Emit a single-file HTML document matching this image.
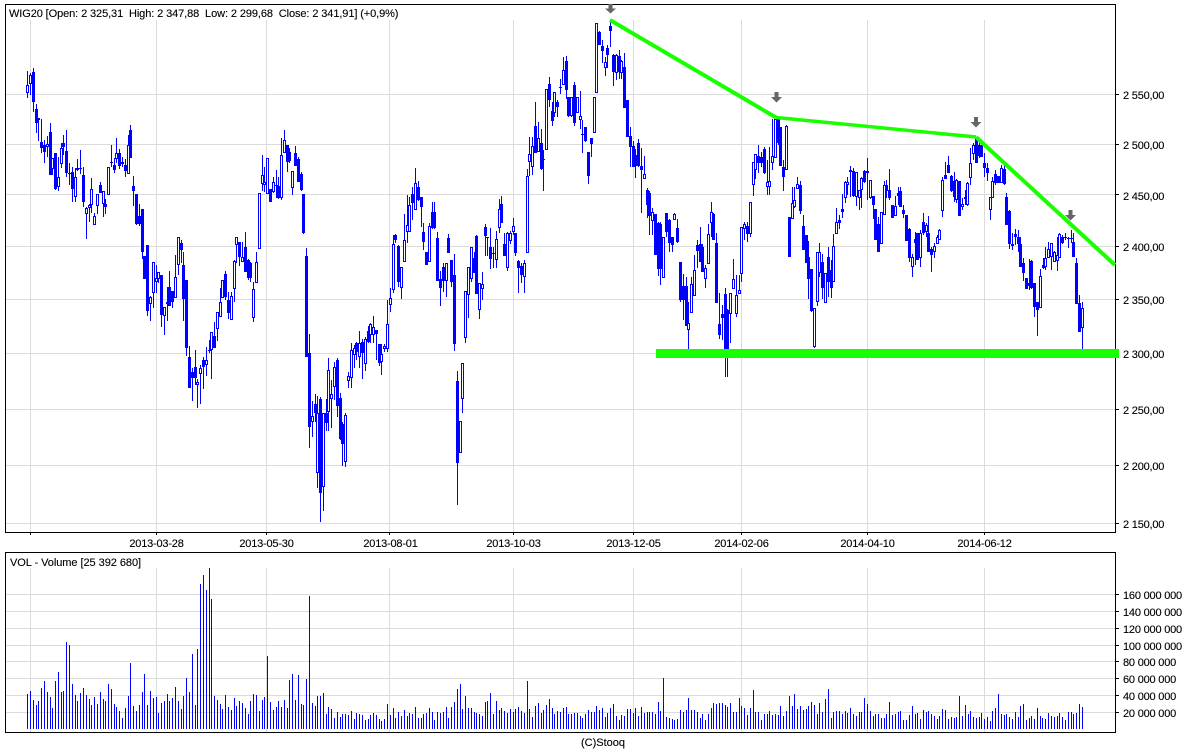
<!DOCTYPE html>
<html><head><meta charset="utf-8"><title>WIG20</title>
<style>
html,body{margin:0;padding:0;background:#fff;width:1200px;height:750px;overflow:hidden}
svg{display:block;position:absolute;left:0;top:0}
text{font-family:"Liberation Sans",Arial,sans-serif;font-size:11px;fill:#000;white-space:pre;letter-spacing:-.2px;stroke:#000;stroke-width:.12px}
text.t{letter-spacing:-.1px}
text.v{letter-spacing:-.05px}
text.c{letter-spacing:0}
</style></head><body>
<svg width="1200" height="750" viewBox="0 0 1200 750" xmlns="http://www.w3.org/2000/svg">
<rect width="1200" height="750" fill="#fff"/>
<g shape-rendering="crispEdges" fill="none">
<path stroke="#dbdbdb" d="M6 94.5H1115M6 144.5H1115M6 194.5H1115M6 246.5H1115M6 299.5H1115M6 353.5H1115M6 409.5H1115M6 465.5H1115M6 523.5H1115M30.5 20V532M156.5 20V532M266.5 20V532M389.5 20V532M513.5 20V532M633.5 20V532M741.5 20V532M867.5 20V532M984.5 20V532M6 594.5H1115M6 611.5H1115M6 628.5H1115M6 645.5H1115M6 661.5H1115M6 678.5H1115M6 695.5H1115M6 712.5H1115M30.5 568V732M156.5 568V732M266.5 568V732M389.5 568V732M513.5 568V732M633.5 568V732M741.5 568V732M867.5 568V732M984.5 568V732"/>
<path stroke="#000" d="M5.5 4.5H1115.5V532.5H5.5ZM5.5 552.5H1115.5V732.5H5.5ZM1115 94.5h4M1115 144.5h4M1115 194.5h4M1115 246.5h4M1115 299.5h4M1115 353.5h4M1115 409.5h4M1115 465.5h4M1115 523.5h4M1115 594.5h4M1115 611.5h4M1115 628.5h4M1115 645.5h4M1115 661.5h4M1115 678.5h4M1115 695.5h4M1115 712.5h4M30.5 532v3M156.5 532v3M266.5 532v3M389.5 532v3M513.5 532v3M633.5 532v3M741.5 532v3M867.5 532v3M984.5 532v3"/>
<!-- wicks -->
<path stroke="#00f" d="M27.5 71V98M30.5 73V95M33.5 68V112M36.5 104V133M38.5 118V141M41.5 119V153M44.5 140V163M47.5 136V157M50.5 123V175M52.5 158V175M55.5 153V190M58.5 157V191M61.5 143V168M63.5 135V155M66.5 130V177M69.5 163V185M72.5 167V202M75.5 168V202M77.5 159V171M80.5 150V174M83.5 167V207M86.5 207V239M89.5 204V222M91.5 178V213M94.5 213V225M97.5 194V214M100.5 182V193M103.5 191V217M105.5 199V214M108.5 167V194M111.5 145V167M114.5 158V173M116.5 138V163M119.5 149V169M122.5 157V167M125.5 159V177M128.5 135V173M130.5 125V158M133.5 176V206M136.5 194V225M139.5 204V226M142.5 209V259M144.5 256V279M147.5 245V316M150.5 296V321M153.5 262V308M156.5 265V293M158.5 273V283M161.5 275V327M164.5 307V335M167.5 287V321M169.5 271V306M172.5 291V308M175.5 255V297M178.5 237V275M181.5 240V263M183.5 252V321M186.5 280V356M189.5 346V388M192.5 368V401M195.5 350V385M197.5 379V408M200.5 365V404M203.5 357V389M206.5 347V376M209.5 340V353M211.5 332V379M214.5 322V348M217.5 312V341M220.5 288V317M222.5 280V297M225.5 271V300M228.5 292V319M231.5 292V320M234.5 260V302M236.5 237V263M239.5 242V266M242.5 242V262M245.5 232V272M248.5 259V280M250.5 262V282M253.5 282V322M256.5 252V283M259.5 193V248M262.5 155V191M264.5 167V192M267.5 158V193M270.5 189V202M273.5 177V193M276.5 170V198M278.5 177V199M281.5 138V200M284.5 130V152M287.5 145V172M289.5 148V163M292.5 171V195M295.5 146V166M298.5 157V182M301.5 172V191M303.5 194V234M306.5 248V357M309.5 334V448M312.5 401V437M315.5 394V422M317.5 396V488M320.5 397V522M323.5 413V511M326.5 399V431M328.5 358V431M331.5 380V428M334.5 362V400M337.5 358V417M340.5 393V440M342.5 422V466M345.5 413V467M348.5 372V388M351.5 343V388M354.5 345V368M356.5 342V360M359.5 331V368M362.5 339V379M365.5 337V371M368.5 326V343M370.5 323V343M373.5 316V343M376.5 330V360M379.5 344V366M381.5 344V375M384.5 344V352M387.5 300V352M390.5 288V312M393.5 235V293M395.5 234V243M398.5 245V287M401.5 267V299M404.5 214V262M407.5 195V243M409.5 197V231M412.5 187V220M415.5 168V210M418.5 181V201M421.5 197V227M423.5 223V250M426.5 252V265M429.5 223V262M432.5 202V229M434.5 202V229M437.5 232V281M440.5 271V306M443.5 263V292M446.5 263V297M448.5 234V253M451.5 260V287M454.5 254V351M457.5 371V505M460.5 421V453M462.5 363V413M465.5 291V343M468.5 267V318M471.5 247V282M474.5 252V273M476.5 235V294M479.5 283V319M482.5 272V300M485.5 224V256M487.5 237V256M490.5 228V269M493.5 247V268M496.5 231V268M499.5 199V233M501.5 196V223M504.5 233V256M507.5 232V271M510.5 231V244M513.5 218V235M515.5 233V256M518.5 260V293M521.5 263V283M524.5 260V293M527.5 169V252M529.5 137V176M532.5 137V175M535.5 102V153M538.5 122V152M541.5 129V170M543.5 150V191M546.5 89V150M549.5 77V107M552.5 102V126M554.5 92V117M557.5 100V117M560.5 79V94M563.5 57V85M566.5 56V99M568.5 97V117M571.5 97V117M574.5 82V126M577.5 97V113M580.5 91V129M582.5 120V153M585.5 127V142M588.5 152V184M591.5 138V157M594.5 97V132M596.5 23V92M599.5 31V45M602.5 40V63M605.5 57V76M607.5 45V68M610.5 22V47M613.5 54V86M616.5 54V80M619.5 50V79M621.5 60V79M624.5 53V108M627.5 100V137M630.5 127V167M633.5 141V167M635.5 149V178M638.5 139V167M641.5 148V213M644.5 156V179M647.5 188V218M649.5 191V235M652.5 208V235M655.5 214V255M658.5 222V276M660.5 222V285M663.5 237V277M666.5 213V237M669.5 219V252M672.5 237V252M674.5 213V220M677.5 219V243M680.5 262V302M683.5 274V320M686.5 277V326M688.5 302V350M691.5 277V313M694.5 255V295M697.5 240V268M700.5 227V262M702.5 244V272M705.5 265V288M708.5 224V263M711.5 202V237M713.5 213V240M716.5 233V303M719.5 293V339M722.5 305V340M725.5 288V377M727.5 309V377M730.5 293V343M733.5 259V288M736.5 275V317M739.5 275V293M741.5 227V282M744.5 222V240M747.5 222V242M750.5 202V237M753.5 162V196M755.5 154V179M758.5 145V173M761.5 152V167M764.5 147V174M767.5 160V195M769.5 147V195M772.5 119V170M775.5 119V157M778.5 118V145M780.5 127V166M783.5 160V191M786.5 125V170M789.5 217V257M792.5 187V219M794.5 187V208M797.5 177V188M800.5 181V214M803.5 215V250M806.5 235V263M808.5 241V299M811.5 269V312M814.5 308V348M817.5 252V306M819.5 243V277M822.5 254V299M825.5 273V302M828.5 247V297M831.5 260V298M833.5 234V281M836.5 208V233M839.5 215V229M842.5 194V218M845.5 181V203M847.5 177V195M850.5 166V197M853.5 168V197M856.5 172V206M859.5 190V210M861.5 177V208M864.5 170V183M867.5 158V200M870.5 180V199M873.5 196V219M875.5 209V240M878.5 217V252M881.5 212V243M884.5 181V215M886.5 180V198M889.5 169V200M892.5 205V218M895.5 196V215M898.5 187V205M900.5 187V207M903.5 205V218M906.5 215V241M909.5 228V262M912.5 254V277M915.5 232V265M917.5 233V260M920.5 230V267M923.5 213V235M926.5 223V237M928.5 216V252M931.5 247V272M934.5 243V258M937.5 235V244M939.5 229V239M942.5 177V217M945.5 162V179M948.5 156V173M951.5 175V192M954.5 172V202M956.5 179V203M959.5 181V216M962.5 198V210M965.5 190V205M967.5 182V206M970.5 148V185M973.5 143V160M976.5 138V163M979.5 140V158M981.5 145V157M984.5 153V177M987.5 163V181M990.5 197V220M992.5 177V197M995.5 170V185M998.5 176V183M1001.5 165V183M1004.5 165V185M1006.5 193V225M1009.5 210V249M1012.5 233V250M1015.5 229V245M1018.5 230V252M1020.5 237V267M1023.5 258V281M1026.5 278V289M1029.5 259V290M1031.5 260V289M1034.5 283V317M1037.5 302V336M1040.5 269V307M1043.5 258V269M1045.5 247V270M1048.5 242V257M1051.5 243V270M1054.5 251V261M1057.5 237V271M1059.5 233V258M1062.5 235V244M1065.5 233V240M1068.5 237V248M1071.5 230V243M1073.5 233V257M1076.5 258V304M1079.5 295V332M1082.5 302V350"/>
<!-- hollow bodies -->
<path stroke="#00f" fill="#fff" d="M26.5 85.5h2v7h-2zM29.5 75.5h2v8h-2zM46.5 144.5h2v2h-2zM51.5 158.5h2v10h-2zM57.5 177.5h2v9h-2zM60.5 148.5h2v15h-2zM74.5 177.5h2v19h-2zM85.5 208.5h2v5h-2zM88.5 205.5h2v2h-2zM90.5 189.5h2v15h-2zM93.5 216.5h2v8h-2zM96.5 194.5h2v11h-2zM102.5 191.5h2v12h-2zM107.5 167.5h2v27h-2zM115.5 153.5h2v5h-2zM127.5 145.5h2v28h-2zM149.5 297.5h2v6h-2zM152.5 262.5h2v30h-2zM155.5 278.5h2v3h-2zM157.5 272.5h2v6h-2zM163.5 307.5h2v8h-2zM174.5 277.5h2v20h-2zM177.5 237.5h2v27h-2zM196.5 382.5h2v2h-2zM199.5 368.5h2v5h-2zM205.5 360.5h2v4h-2zM210.5 332.5h2v17h-2zM216.5 312.5h2v16h-2zM219.5 302.5h2v14h-2zM221.5 280.5h2v17h-2zM230.5 296.5h2v23h-2zM233.5 261.5h2v27h-2zM235.5 237.5h2v7h-2zM241.5 257.5h2v4h-2zM252.5 289.5h2v28h-2zM255.5 262.5h2v20h-2zM258.5 193.5h2v55h-2zM261.5 175.5h2v8h-2zM263.5 182.5h2v2h-2zM266.5 158.5h2v35h-2zM272.5 182.5h2v9h-2zM280.5 155.5h2v42h-2zM283.5 140.5h2v12h-2zM291.5 171.5h2v16h-2zM311.5 416.5h2v5h-2zM316.5 413.5h2v59h-2zM322.5 413.5h2v73h-2zM327.5 370.5h2v41h-2zM330.5 394.5h2v4h-2zM333.5 367.5h2v19h-2zM344.5 415.5h2v46h-2zM347.5 376.5h2v4h-2zM350.5 350.5h2v27h-2zM353.5 348.5h2v6h-2zM358.5 343.5h2v13h-2zM364.5 339.5h2v24h-2zM369.5 324.5h2v10h-2zM372.5 327.5h2v7h-2zM380.5 354.5h2v7h-2zM383.5 346.5h2v2h-2zM386.5 324.5h2v24h-2zM389.5 298.5h2v6h-2zM392.5 244.5h2v45h-2zM400.5 267.5h2v20h-2zM403.5 240.5h2v21h-2zM406.5 225.5h2v6h-2zM408.5 205.5h2v26h-2zM414.5 183.5h2v26h-2zM428.5 226.5h2v35h-2zM445.5 263.5h2v17h-2zM459.5 421.5h2v31h-2zM461.5 363.5h2v35h-2zM464.5 291.5h2v46h-2zM467.5 267.5h2v27h-2zM470.5 247.5h2v31h-2zM478.5 283.5h2v26h-2zM481.5 284.5h2v4h-2zM495.5 239.5h2v20h-2zM498.5 209.5h2v18h-2zM506.5 233.5h2v34h-2zM509.5 233.5h2v7h-2zM512.5 226.5h2v5h-2zM523.5 263.5h2v13h-2zM526.5 176.5h2v76h-2zM528.5 154.5h2v7h-2zM531.5 146.5h2v20h-2zM537.5 138.5h2v13h-2zM545.5 89.5h2v60h-2zM553.5 92.5h2v20h-2zM562.5 70.5h2v14h-2zM570.5 97.5h2v18h-2zM576.5 97.5h2v15h-2zM579.5 116.5h2v3h-2zM593.5 97.5h2v35h-2zM595.5 23.5h2v69h-2zM604.5 62.5h2v5h-2zM615.5 55.5h2v17h-2zM620.5 61.5h2v11h-2zM643.5 174.5h2v4h-2zM651.5 212.5h2v8h-2zM662.5 237.5h2v40h-2zM673.5 214.5h2v5h-2zM687.5 323.5h2v6h-2zM690.5 284.5h2v28h-2zM693.5 270.5h2v25h-2zM704.5 268.5h2v10h-2zM707.5 234.5h2v29h-2zM710.5 212.5h2v10h-2zM729.5 293.5h2v20h-2zM732.5 279.5h2v9h-2zM735.5 295.5h2v18h-2zM738.5 290.5h2v3h-2zM740.5 227.5h2v46h-2zM743.5 224.5h2v4h-2zM749.5 202.5h2v31h-2zM752.5 162.5h2v22h-2zM754.5 154.5h2v15h-2zM766.5 182.5h2v4h-2zM768.5 181.5h2v5h-2zM771.5 156.5h2v6h-2zM774.5 119.5h2v38h-2zM785.5 126.5h2v43h-2zM791.5 203.5h2v15h-2zM793.5 200.5h2v6h-2zM796.5 184.5h2v4h-2zM813.5 308.5h2v38h-2zM816.5 252.5h2v49h-2zM818.5 252.5h2v20h-2zM824.5 273.5h2v29h-2zM832.5 246.5h2v35h-2zM835.5 222.5h2v11h-2zM844.5 182.5h2v15h-2zM846.5 182.5h2v2h-2zM855.5 172.5h2v24h-2zM858.5 190.5h2v7h-2zM860.5 178.5h2v11h-2zM869.5 180.5h2v17h-2zM880.5 212.5h2v31h-2zM883.5 185.5h2v29h-2zM894.5 206.5h2v9h-2zM911.5 257.5h2v9h-2zM919.5 233.5h2v24h-2zM925.5 225.5h2v6h-2zM933.5 246.5h2v5h-2zM936.5 237.5h2v6h-2zM938.5 230.5h2v9h-2zM941.5 180.5h2v30h-2zM955.5 180.5h2v19h-2zM961.5 204.5h2v2h-2zM966.5 183.5h2v21h-2zM969.5 163.5h2v14h-2zM972.5 145.5h2v8h-2zM989.5 197.5h2v12h-2zM991.5 181.5h2v16h-2zM1000.5 168.5h2v14h-2zM1011.5 244.5h2v1h-2zM1039.5 276.5h2v31h-2zM1044.5 258.5h2v8h-2zM1047.5 249.5h2v8h-2zM1050.5 243.5h2v13h-2zM1053.5 252.5h2v9h-2zM1056.5 255.5h2v5h-2zM1058.5 234.5h2v23h-2zM1081.5 308.5h2v19h-2z"/>
<!-- solid bodies -->
<path stroke="#00f" stroke-width="3" d="M33.5 72V102M36.5 109V123M38.5 118V120M41.5 142V148M44.5 145V152M50.5 132V175M55.5 153V189M63.5 143V147M66.5 151V173M69.5 173V174M72.5 172V189M77.5 168V170M80.5 168V169M83.5 175V202M100.5 185V193M105.5 204V207M111.5 162V163M114.5 165V170M119.5 153V166M122.5 162V164M125.5 165V171M130.5 130V158M133.5 186V191M136.5 194V224M139.5 216V224M142.5 209V252M144.5 256V279M147.5 245V311M161.5 275V315M167.5 302V304M169.5 287V306M172.5 291V302M181.5 243V250M183.5 265V299M186.5 280V348M189.5 357V388M192.5 372V378M195.5 367V378M203.5 360V367M209.5 350V351M214.5 336V348M225.5 274V297M228.5 300V313M239.5 242V257M245.5 247V272M248.5 260V278M250.5 263V278M270.5 189V202M276.5 185V186M278.5 186V198M287.5 145V162M289.5 152V161M295.5 153V166M298.5 159V182M301.5 174V190M303.5 194V233M306.5 256V357M309.5 353V427M315.5 404V413M320.5 399V493M326.5 413V423M337.5 360V406M340.5 398V439M342.5 424V444M356.5 343V352M362.5 342V353M368.5 331V342M376.5 330V334M379.5 344V363M395.5 235V240M398.5 246V282M412.5 194V203M418.5 187V200M421.5 197V207M423.5 232V242M426.5 252V265M432.5 212V228M434.5 212V228M437.5 238V281M440.5 279V288M443.5 267V281M448.5 238V253M451.5 260V282M454.5 275V344M457.5 381V463M474.5 258V273M476.5 236V294M485.5 227V236M487.5 237V238M490.5 247V259M493.5 253V254M501.5 204V223M504.5 244V256M515.5 233V253M518.5 261V268M521.5 266V275M535.5 126V153M541.5 143V169M543.5 159V160M549.5 84V100M552.5 111V121M557.5 102V107M560.5 87V88M566.5 61V90M568.5 97V116M574.5 85V123M582.5 134V135M585.5 127V141M588.5 152V176M591.5 138V144M599.5 32V45M602.5 46V51M607.5 48V55M610.5 26V31M613.5 55V72M619.5 56V72M624.5 67V108M627.5 100V137M630.5 136V147M633.5 146V167M635.5 155V166M638.5 143V166M641.5 166V170M647.5 190V205M649.5 193V216M655.5 214V255M658.5 223V269M660.5 224V269M666.5 213V232M669.5 220V243M672.5 237V245M677.5 228V242M680.5 262V300M683.5 286V300M686.5 286V326M697.5 245V251M700.5 244V262M702.5 247V272M713.5 214V240M716.5 243V303M719.5 324V335M722.5 314V318M725.5 294V349M727.5 310V349M747.5 226V234M758.5 156V163M761.5 157V163M764.5 149V173M778.5 119V143M780.5 127V166M783.5 167V177M789.5 217V257M800.5 185V211M803.5 226V250M806.5 235V263M808.5 257V279M811.5 269V311M822.5 262V288M828.5 257V282M831.5 270V288M839.5 220V223M842.5 209V212M850.5 170V172M853.5 171V196M864.5 171V182M867.5 171V173M873.5 196V205M875.5 209V240M878.5 224V252M886.5 185V191M889.5 190V198M892.5 205V218M898.5 193V196M900.5 191V207M903.5 210V214M906.5 215V241M909.5 229V258M915.5 239V243M917.5 233V260M923.5 222V233M928.5 233V252M931.5 249V255M945.5 175V179M948.5 165V173M951.5 176V191M954.5 181V197M959.5 181V216M965.5 197V199M976.5 139V163M979.5 145V156M981.5 145V157M984.5 163V168M987.5 168V173M995.5 174V183M998.5 176V183M1004.5 169V184M1006.5 197V225M1009.5 211V244M1015.5 234V237M1018.5 237V244M1020.5 244V267M1023.5 263V273M1026.5 278V289M1029.5 283V286M1031.5 261V288M1034.5 283V307M1037.5 302V310M1043.5 265V268M1062.5 237V243M1065.5 237V238M1068.5 238V239M1071.5 238V239M1073.5 242V257M1076.5 263V304M1079.5 303V332"/>
<!-- volume -->
<path stroke="#00f" d="M27.5 694V729M30.5 691V729M33.5 700V729M36.5 705V729M38.5 701V729M41.5 688V729M44.5 681V729M47.5 692V729M50.5 697V729M52.5 708V729M55.5 681V729M58.5 672V729M61.5 692V729M63.5 691V729M66.5 642V729M69.5 645V729M72.5 684V729M75.5 695V729M77.5 701V729M80.5 693V729M83.5 688V729M86.5 695V729M89.5 699V729M91.5 705V729M94.5 697V729M97.5 704V729M100.5 692V729M103.5 699V729M105.5 701V729M108.5 684V729M111.5 689V729M114.5 704V729M116.5 707V729M119.5 711V729M122.5 718V729M125.5 708V729M128.5 696V729M130.5 663V729M133.5 706V729M136.5 711V729M139.5 705V729M142.5 692V729M144.5 674V729M147.5 705V729M150.5 691V729M153.5 698V729M156.5 697V729M158.5 713V729M161.5 703V729M164.5 701V729M167.5 694V729M169.5 701V729M172.5 698V729M175.5 687V729M178.5 701V729M181.5 709V729M183.5 696V729M186.5 678V729M189.5 692V729M192.5 654V729M195.5 705V729M197.5 649V729M200.5 584V729M203.5 575V729M206.5 590V729M209.5 568V729M211.5 599V729M214.5 696V729M217.5 700V729M220.5 704V729M222.5 709V729M225.5 695V729M228.5 707V729M231.5 710V729M234.5 698V729M236.5 706V729M239.5 701V729M242.5 703V729M245.5 708V729M248.5 714V729M250.5 701V729M253.5 694V729M256.5 695V729M259.5 711V729M262.5 700V729M264.5 697V729M267.5 656V729M270.5 702V729M273.5 710V729M276.5 707V729M278.5 701V729M281.5 707V729M284.5 700V729M287.5 708V729M289.5 680V729M292.5 674V729M295.5 700V729M298.5 675V729M301.5 704V729M303.5 705V729M306.5 679V729M309.5 596V729M312.5 703V729M315.5 706V729M317.5 696V729M320.5 696V729M323.5 693V729M326.5 714V729M328.5 707V729M331.5 709V729M334.5 718V729M337.5 712V729M340.5 717V729M342.5 714V729M345.5 714V729M348.5 715V729M351.5 711V729M354.5 719V729M356.5 713V729M359.5 714V729M362.5 715V729M365.5 720V729M368.5 719V729M370.5 715V729M373.5 713V729M376.5 715V729M379.5 719V729M381.5 721V729M384.5 719V729M387.5 704V729M390.5 715V729M393.5 708V729M395.5 718V729M398.5 712V729M401.5 716V729M404.5 710V729M407.5 716V729M409.5 713V729M412.5 714V729M415.5 707V729M418.5 718V729M421.5 718V729M423.5 714V729M426.5 713V729M429.5 708V729M432.5 712V729M434.5 720V729M437.5 712V729M440.5 713V729M443.5 712V729M446.5 707V729M448.5 718V729M451.5 707V729M454.5 702V729M457.5 689V729M460.5 684V729M462.5 709V729M465.5 696V729M468.5 708V729M471.5 708V729M474.5 712V729M476.5 713V729M479.5 714V729M482.5 716V729M485.5 702V729M487.5 701V729M490.5 693V729M493.5 714V729M496.5 701V729M499.5 710V729M501.5 708V729M504.5 711V729M507.5 713V729M510.5 709V729M513.5 712V729M515.5 709V729M518.5 707V729M521.5 711V729M524.5 713V729M527.5 681V729M529.5 709V729M532.5 717V729M535.5 706V729M538.5 703V729M541.5 713V729M543.5 710V729M546.5 705V729M549.5 699V729M552.5 708V729M554.5 714V729M557.5 711V729M560.5 712V729M563.5 708V729M566.5 707V729M568.5 714V729M571.5 714V729M574.5 713V729M577.5 713V729M580.5 716V729M582.5 718V729M585.5 714V729M588.5 710V729M591.5 712V729M594.5 712V729M596.5 706V729M599.5 710V729M602.5 708V729M605.5 717V729M607.5 713V729M610.5 708V729M613.5 704V729M616.5 716V729M619.5 720V729M621.5 715V729M624.5 716V729M627.5 709V729M630.5 709V729M633.5 713V729M635.5 708V729M638.5 716V729M641.5 707V729M644.5 713V729M647.5 712V729M649.5 712V729M652.5 712V729M655.5 714V729M658.5 702V729M660.5 711V729M663.5 678V729M666.5 717V729M669.5 718V729M672.5 719V729M674.5 720V729M677.5 719V729M680.5 710V729M683.5 712V729M686.5 710V729M688.5 698V729M691.5 710V729M694.5 710V729M697.5 712V729M700.5 718V729M702.5 714V729M705.5 720V729M708.5 714V729M711.5 708V729M713.5 703V729M716.5 704V729M719.5 703V729M722.5 703V729M725.5 705V729M727.5 707V729M730.5 703V729M733.5 712V729M736.5 712V729M739.5 698V729M741.5 706V729M744.5 708V729M747.5 715V729M750.5 708V729M753.5 690V729M755.5 712V729M758.5 712V729M761.5 720V729M764.5 714V729M767.5 714V729M769.5 711V729M772.5 715V729M775.5 714V729M778.5 715V729M780.5 706V729M783.5 716V729M786.5 711V729M789.5 696V729M792.5 706V729M794.5 694V729M797.5 709V729M800.5 706V729M803.5 710V729M806.5 709V729M808.5 706V729M811.5 702V729M814.5 705V729M817.5 714V729M819.5 703V729M822.5 712V729M825.5 699V729M828.5 689V729M831.5 718V729M833.5 712V729M836.5 711V729M839.5 711V729M842.5 714V729M845.5 711V729M847.5 713V729M850.5 708V729M853.5 714V729M856.5 716V729M859.5 712V729M861.5 712V729M864.5 698V729M867.5 704V729M870.5 711V729M873.5 716V729M875.5 714V729M878.5 714V729M881.5 718V729M884.5 718V729M886.5 714V729M889.5 702V729M892.5 715V729M895.5 714V729M898.5 712V729M900.5 711V729M903.5 720V729M906.5 720V729M909.5 715V729M912.5 706V729M915.5 714V729M917.5 713V729M920.5 719V729M923.5 710V729M926.5 712V729M928.5 711V729M931.5 714V729M934.5 716V729M937.5 719V729M939.5 716V729M942.5 709V729M945.5 710V729M948.5 719V729M951.5 717V729M954.5 718V729M956.5 717V729M959.5 696V729M962.5 716V729M965.5 705V729M968.5 714V729M970.5 711V729M973.5 717V729M976.5 718V729M979.5 717V729M981.5 713V729M984.5 719V729M987.5 717V729M990.5 721V729M992.5 711V729M995.5 708V729M998.5 694V729M1001.5 714V729M1004.5 715V729M1006.5 714V729M1009.5 717V729M1012.5 719V729M1015.5 712V729M1018.5 717V729M1020.5 706V729M1023.5 704V729M1026.5 720V729M1029.5 718V729M1031.5 716V729M1034.5 719V729M1037.5 708V729M1040.5 716V729M1042.5 718V729M1045.5 719V729M1048.5 713V729M1051.5 716V729M1054.5 717V729M1057.5 716V729M1059.5 713V729M1062.5 717V729M1065.5 720V729M1068.5 712V729M1071.5 712V729M1073.5 714V729M1076.5 713V729M1079.5 704V729M1082.5 707V729"/>
</g>
<!-- trend lines -->
<g fill="none" stroke="#19ff00">
<polyline stroke-width="4" stroke-linejoin="round" points="610,20 776,117.5"/>
<polyline stroke-width="3.4" stroke-linejoin="round" points="776,117.5 976,137"/>
<polyline stroke-width="4" stroke-linejoin="round" points="976,137 1115,265"/>
</g>
<rect x="656" y="349" width="463" height="9" fill="#19ff00"/>
<!-- arrows -->
<g fill="#666">
<path d="M608.5 4h4v4.500h3.500l-5.500 5-5.500-5h3.500z"/>
<path d="M774.500 92h4v5h3.500l-5.500 5.500-5.500-5.500h3.500z"/>
<path d="M974 117h4v5h3.500l-5.500 5.500-5.500-5.500h3.500z"/>
<path d="M1068.500 210h4v5h3.500l-5.500 5.500-5.500-5.500h3.500z"/>
</g>
<!-- labels -->
<text class="t" x="9" y="17">WIG20 [Open: 2 325,31  High: 2 347,88  Low: 2 299,68  Close: 2 341,91] (+0,9%)</text>
<text class="v" x="10" y="566">VOL - Volume [25 392 680]</text>
<text x="1123" y="99">2 550,00</text>
<text x="1123" y="149">2 500,00</text>
<text x="1123" y="200">2 450,00</text>
<text x="1123" y="251">2 400,00</text>
<text x="1123" y="304">2 350,00</text>
<text x="1123" y="358">2 300,00</text>
<text x="1123" y="414">2 250,00</text>
<text x="1123" y="470">2 200,00</text>
<text x="1123" y="528">2 150,00</text>
<text x="156.500" y="547" text-anchor="middle">2013-03-28</text>
<text x="266.500" y="547" text-anchor="middle">2013-05-30</text>
<text x="390.500" y="547" text-anchor="middle">2013-08-01</text>
<text x="513.500" y="547" text-anchor="middle">2013-10-03</text>
<text x="633.500" y="547" text-anchor="middle">2013-12-05</text>
<text x="741.500" y="547" text-anchor="middle">2014-02-06</text>
<text x="867.500" y="547" text-anchor="middle">2014-04-10</text>
<text x="984.500" y="547" text-anchor="middle">2014-06-12</text>
<text x="1123" y="599">160 000 000</text>
<text x="1123" y="616">140 000 000</text>
<text x="1123" y="633">120 000 000</text>
<text x="1123" y="650">100 000 000</text>
<text x="1123" y="666">80 000 000</text>
<text x="1123" y="683">60 000 000</text>
<text x="1123" y="700">40 000 000</text>
<text x="1123" y="717">20 000 000</text>
<text class="c" x="603" y="746" text-anchor="middle">(C)Stooq</text>
</svg>
</body></html>
